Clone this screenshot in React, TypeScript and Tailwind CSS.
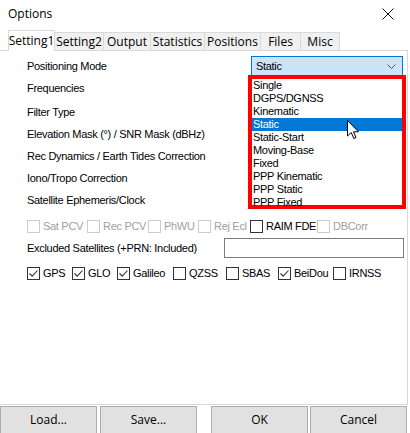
import React from "react";

const ui = { fontFamily: '"Open Sans", "Noto Sans", sans-serif' };
const lbl = { fontFamily: '"Liberation Sans", Arial, sans-serif', letterSpacing: "-0.3px" };

function Check({ checked, disabled, label }: { checked?: boolean; disabled?: boolean; label: string }) {
  return (
    <div className="flex items-center whitespace-nowrap">
      <div
        className={
          "w-[13px] h-[13px] shrink-0 border bg-white flex items-center justify-center " +
          (disabled ? "border-[#cccccc]" : "border-[#333333]")
        }
      >
        {checked && (
          <svg width="11" height="11" viewBox="0 0 11 11">
            <path d="M1.5 5.5 L4.2 8.2 L9.5 2.5" fill="none" stroke="#333" strokeWidth="1.1" />
          </svg>
        )}
      </div>
      <span className={"ml-[3px] " + (disabled ? "text-[#a0a0a0]" : "text-black")}>{label}</span>
    </div>
  );
}

const tabs = ["Setting2", "Output", "Statistics", "Positions", "Files", "Misc"];
const tabW = [49, 47, 54, 56, 40, 39];
const items = ["Single", "DGPS/DGNSS", "Kinematic", "Static", "Static-Start", "Moving-Base", "Fixed", "PPP Kinematic", "PPP Static", "PPP Fixed"];

export default function App() {
  return (
    <div className="w-[410px] h-[433px] bg-white relative overflow-hidden text-[12px] text-black" style={ui}>
      {/* title bar */}
      <div className="h-[31px] flex items-center justify-between pl-[8px] pr-[16px]">
        <span className="text-[12px] mt-[-4px]">Options</span>
        <svg width="12" height="12" viewBox="0 0 12 12" className="mt-[-4px]">
          <path d="M0.5 0.5 L11.5 11.5 M11.5 0.5 L0.5 11.5" stroke="#111" strokeWidth="1" />
        </svg>
      </div>
      {/* tabs */}
      <div className="flex items-end h-[19px] pl-[8px] relative z-10">
        <div className="w-[47px] h-[21px] bg-white border border-b-0 border-[#d9d9d9] flex items-center justify-center mb-[-1px] pb-[1px]">
          Setting1
        </div>
        {tabs.map((t, i) => (
          <div
            key={t}
            style={{ width: tabW[i] }}
            className="h-[18px] bg-[#f0f0f0] border border-l-0 border-b-0 border-[#d9d9d9] flex items-center justify-center"
          >
            {t}
          </div>
        ))}
      </div>
      {/* panel */}
      <div className="h-[355px] w-[408px] border-t border-r border-b border-[#d9d9d9] bg-white pl-[27px] pt-[4px] text-[11px] whitespace-nowrap" style={lbl}>
        <div className="h-[22px] flex items-center">Positioning Mode</div>
        <div className="h-[22px] flex items-center">Frequencies</div>
        <div className="h-[22px] flex items-center mt-[2px]">Filter Type</div>
        <div className="h-[22px] flex items-center">Elevation Mask (°) / SNR Mask (dBHz)</div>
        <div className="h-[22px] flex items-center">Rec Dynamics / Earth Tides Correction</div>
        <div className="h-[22px] flex items-center">Iono/Tropo Correction</div>
        <div className="h-[22px] flex items-center">Satellite Ephemeris/Clock</div>
        <div className="h-[22px] flex items-center mt-[4px]">
          <div className="w-[60px] shrink-0"><Check disabled label="Sat PCV" /></div>
          <div className="w-[61px] shrink-0"><Check disabled label="Rec PCV" /></div>
          <div className="w-[50px] shrink-0"><Check disabled label="PhWU" /></div>
          <div className="w-[52px] shrink-0"><Check disabled label="Rej Ecl" /></div>
          <div className="w-[67px] shrink-0"><Check label="RAIM FDE" /></div>
          <div className="shrink-0"><Check disabled label="DBCorr" /></div>
        </div>
        <div className="h-[22px] flex items-center">
          <span className="w-[197px] shrink-0">Excluded Satellites (+PRN: Included)</span>
          <div className="w-[180px] h-[20px] shrink-0 border border-[#7a7a7a] bg-white" />
        </div>
        <div className="h-[22px] flex items-center mt-[3px]">
          <div className="w-[45px] shrink-0"><Check checked label="GPS" /></div>
          <div className="w-[45px] shrink-0"><Check checked label="GLO" /></div>
          <div className="w-[56px] shrink-0"><Check checked label="Galileo" /></div>
          <div className="w-[53px] shrink-0"><Check label="QZSS" /></div>
          <div className="w-[52px] shrink-0"><Check label="SBAS" /></div>
          <div className="w-[55px] shrink-0"><Check checked label="BeiDou" /></div>
          <div className="shrink-0"><Check label="IRNSS" /></div>
        </div>
      </div>
      {/* buttons */}
      <div className="flex h-[28px] mt-[1px]">
        <div className="w-[97px] h-[28px] bg-[#e1e1e1] border border-[#adadad] flex items-center justify-center">Load...</div>
        <div className="w-[97px] h-[28px] bg-[#e1e1e1] border border-[#adadad] flex items-center justify-center ml-[3px]">Save...</div>
        <div className="w-[97px] h-[28px] bg-[#e1e1e1] border border-[#adadad] flex items-center justify-center ml-[14px]">OK</div>
        <div className="w-[97px] h-[28px] bg-[#e1e1e1] border border-[#adadad] flex items-center justify-center ml-[2px]">Cancel</div>
      </div>

      {/* combobox (overlay on panel) */}
      <div className="absolute left-[251px] top-[56px] w-[152px] h-[20px] bg-[#cce4f7] border border-[#0078d7] flex items-center justify-between pl-[4px] pr-[6px] text-[11px]" style={lbl}>
        <span>Static</span>
        <svg width="9" height="5" viewBox="0 0 9 5">
          <path d="M0.5 0.5 L4.5 4.5 L8.5 0.5" fill="none" stroke="#555" strokeWidth="1" />
        </svg>
      </div>
      {/* dropdown list with red highlight */}
      <div className="absolute left-[248px] top-[75px] w-[158px] h-[134px] border-[4px] border-[#ff0000] bg-white text-[11px] whitespace-nowrap" style={lbl}>
        {items.map((it) => (
          <div
            key={it}
            className={
              "h-[13px] leading-[13px] pl-[1px] " + (it === "Static" ? "bg-[#0078d7] text-white" : "text-black")
            }
          >
            {it}
          </div>
        ))}
      </div>
      {/* cursor */}
      <svg className="absolute left-[347px] top-[120px]" width="13" height="20" viewBox="0 0 13 20">
        <path d="M0.5 0.5 L0.5 16 L4.2 12.5 L6.8 18.5 L9 17.5 L6.5 11.8 L11.5 11.8 Z" fill="white" stroke="black" strokeWidth="1" strokeLinejoin="round" />
      </svg>
    </div>
  );
}
